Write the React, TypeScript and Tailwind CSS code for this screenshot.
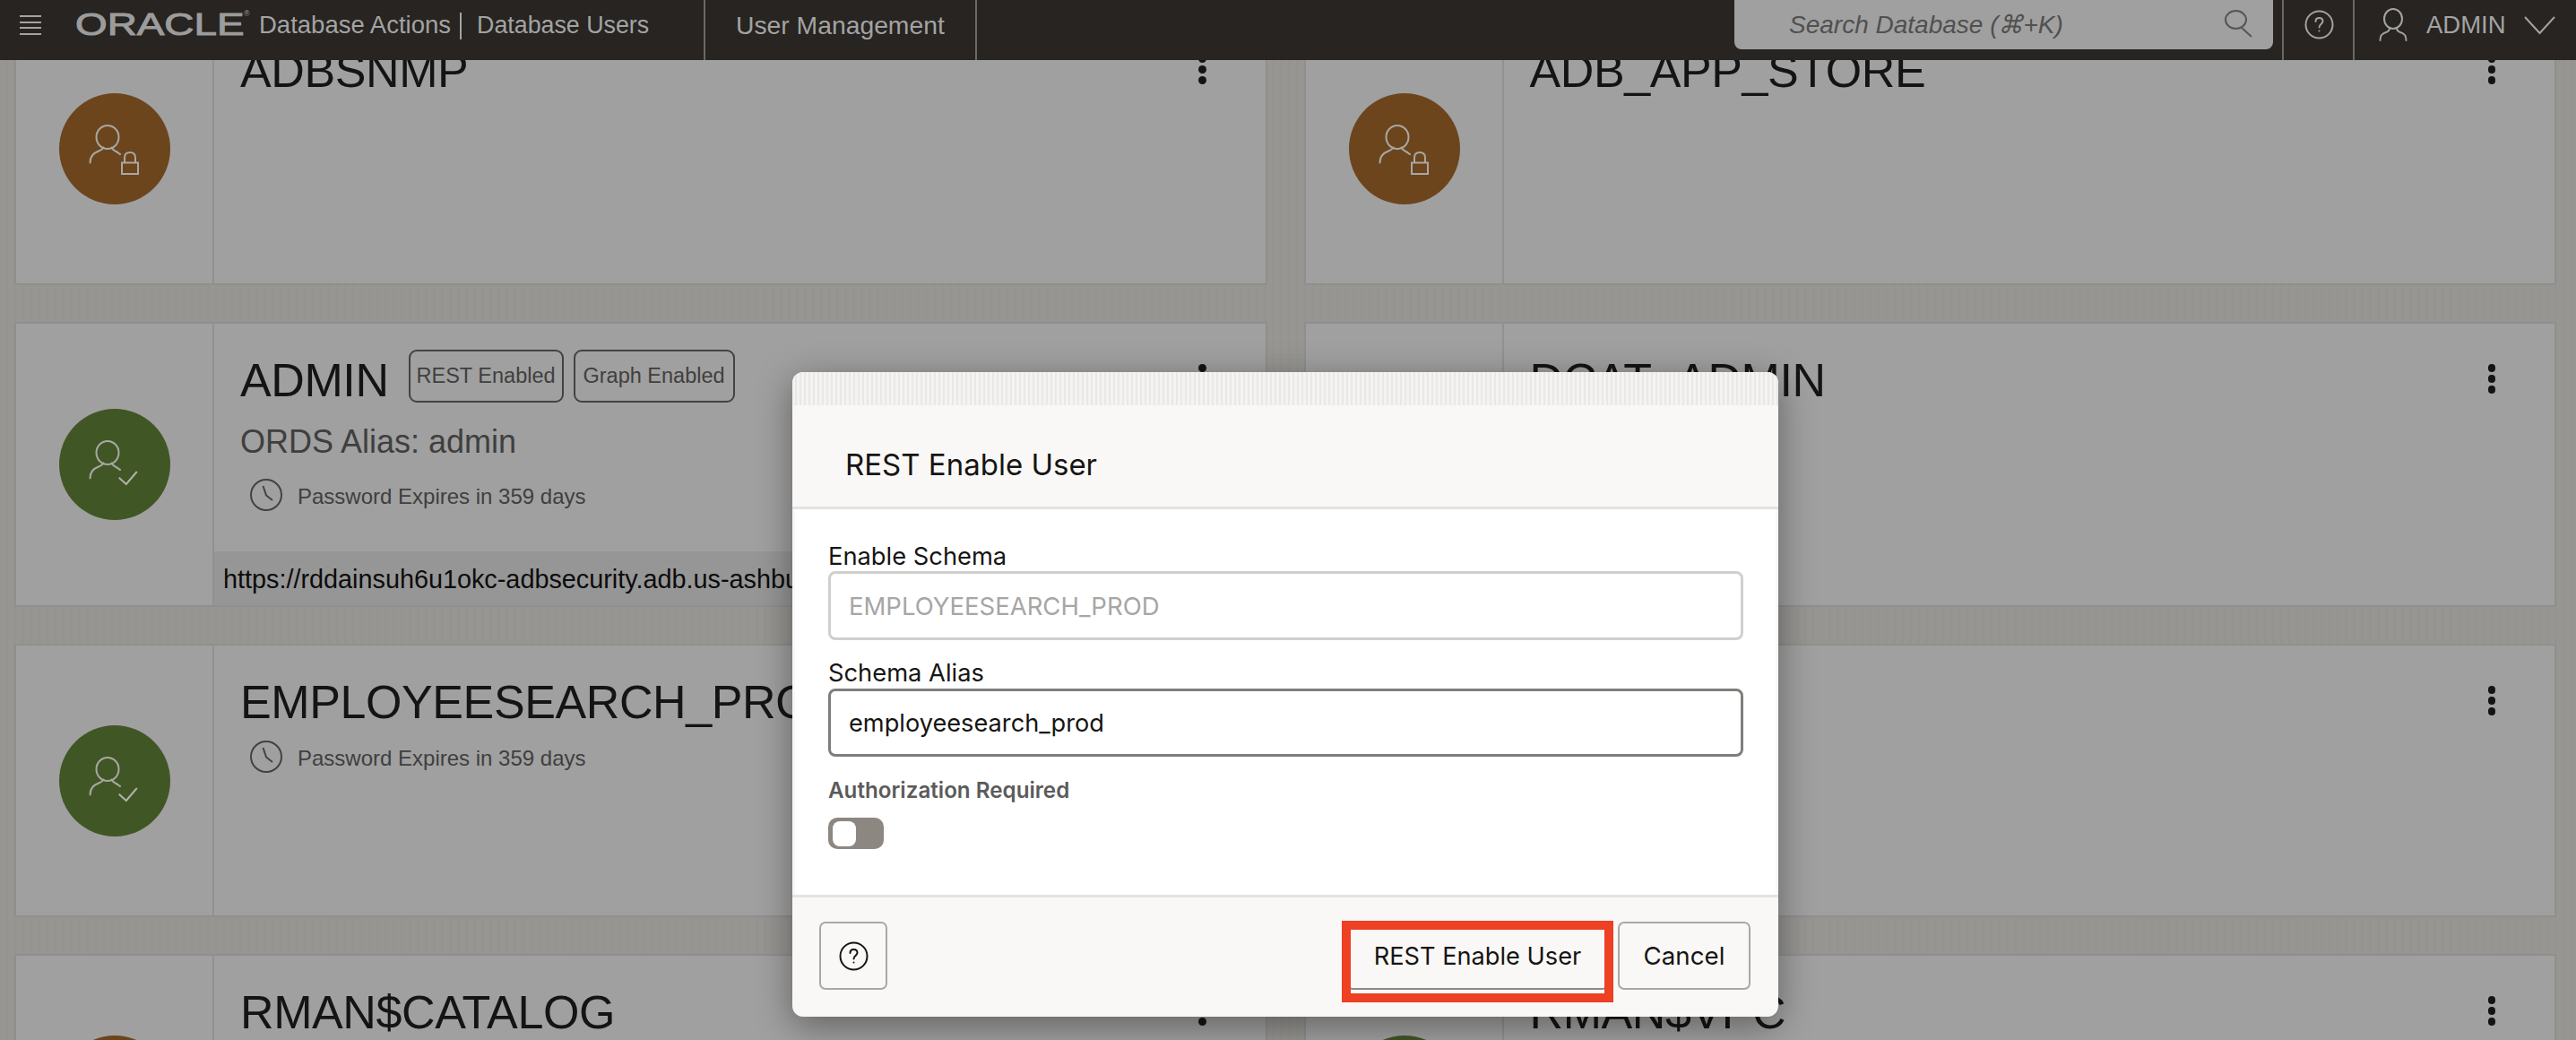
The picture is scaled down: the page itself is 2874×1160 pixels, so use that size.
import React from "react";

const UserShape = ({ stroke, w = 2 }: { stroke: string; w?: number }) => (
  <g fill="none" stroke={stroke} strokeWidth={w} strokeLinecap="round" strokeLinejoin="round">
    <ellipse cx="54" cy="49" rx="12.5" ry="13" />
    <path d="M34.5 77.5C34.5 71 38.5 66.5 44 64.5C47.5 63 49 62 49.5 60.5" />
    <path d="M58.5 60.5C59 62.5 61 63.5 63.5 65C65.5 66 67 67.5 68 68" />
  </g>
);

const Avatar = ({ kind }: { kind: "lock" | "check" }) => (
  <div className={`h-[124px] w-[124px] rounded-full ${kind === "lock" ? "bg-[#6c451d]" : "bg-[#415625]"}`}>
    <svg width="124" height="124" viewBox="0 0 124 124">
      <UserShape stroke="#a8a8a4" />
      {kind === "check" ? (
        <path d="M66.7 76.7L74.8 84L86.8 70" fill="none" stroke="#b0b0ac" strokeWidth="2" />
      ) : (
        <g fill="none" stroke="#a8a8a4" strokeWidth="2">
          <rect x="70" y="77.5" width="18" height="12.5" />
          <path d="M73 77.5V72C73 68 75 66 79 66C83 66 85 68 85 72V77.5" />
        </g>
      )}
    </svg>
  </div>
);

const Kebab = () => (
  <div className="ml-auto mr-[66px] mt-[12px] flex shrink-0 flex-col gap-[3.5px]">
    <span className="h-[8.5px] w-[8.5px] rounded-full bg-[#141414]" />
    <span className="h-[8.5px] w-[8.5px] rounded-full bg-[#141414]" />
    <span className="h-[8.5px] w-[8.5px] rounded-full bg-[#141414]" />
  </div>
);

const Badge = ({ text, w }: { text: string; w: string }) => (
  <span className={`mt-[-4px] flex h-[59px] shrink-0 items-center justify-center rounded-[9px] border-2 border-[#424242] text-[23.5px] text-[#3f3f3f] ${w}`}>
    {text}
  </span>
);

const Password = ({ mt }: { mt: string }) => (
  <div className={`flex items-center gap-[17px] ${mt}`}>
    <svg width="36" height="36" viewBox="0 0 36 36" fill="none" stroke="#424242" strokeWidth="2">
      <circle cx="18" cy="18" r="17" />
      <path d="M14.5 8L18 18.5L25 24" />
    </svg>
    <span className="pt-[3px] text-[24px] leading-[30px] text-[#3f3f3f]">Password Expires in 359 days</span>
  </div>
);

const Card = ({ kind, title, children }: { kind?: "lock" | "check"; title?: string; children?: React.ReactNode }) => (
  <div className="flex min-w-0 border-2 border-[#8f8f8d] bg-[#a0a0a0]">
    <div className="flex w-[221px] shrink-0 items-center justify-center border-r-2 border-[#919191] pl-[1px]">
      {kind && <Avatar kind={kind} />}
    </div>
    <div className="flex min-w-0 flex-1 flex-col">{children ?? <TitleRow title={title} />}</div>
  </div>
);

const TitleRow = ({ title, badges }: { title?: string; badges?: boolean }) => (
  <div className="flex items-start pl-[29px] pt-[33px]">
    {title && <h2 className="whitespace-nowrap text-[52px] font-normal leading-[60px] tracking-[-0.4px] text-[#141414]">{title}</h2>}
    {badges && (
      <div className="ml-[22px] flex gap-[11px]">
        <Badge text="REST Enabled" w="w-[173px]" />
        <Badge text="Graph Enabled" w="w-[180px]" />
      </div>
    )}
    <Kebab />
  </div>
);

const HelpIcon = ({ color, w = 33 }: { color: string; w?: number }) => (
  <svg width={w} height={w} viewBox="0 0 33 33" fill="none" stroke={color} strokeWidth="2">
    <circle cx="16.5" cy="16.5" r="15" />
    <path d="M12.5 13C12.5 10.5 14.2 9 16.5 9C18.8 9 20.5 10.5 20.5 12.8C20.5 15.5 16.5 16 16.5 19.5" strokeLinecap="round" />
    <circle cx="16.5" cy="23.5" r="1" fill={color} stroke="none" />
  </svg>
);

const Sep = ({ cls }: { cls: string }) => <span className={`absolute top-0 h-[67px] w-[2px] bg-[#6b6966] ${cls}`} />;

export default function App() {
  return (
    <div className="relative h-[1160px] w-[2874px] overflow-hidden bg-[#979693] bg-[repeating-linear-gradient(90deg,#979693_0px,#979693_6px,#959491_6px,#959491_9px)] font-['Liberation_Sans',sans-serif]">
      <main className="grid grid-cols-2 grid-rows-[304px_318px_305px_305px] gap-[41px] pl-[16px] pr-[22px] pt-[14px]">
        <Card kind="lock" title="ADBSNMP" />
        <Card kind="lock" title="ADB_APP_STORE" />
        <Card kind="check">
          <TitleRow title="ADMIN" badges />
          <div className="ml-[29px] mt-[17px] text-[36px] leading-[44px] text-[#3f3f3f]">ORDS Alias: admin</div>
          <Password mt="mt-[19px] ml-[40px]" />
          <div className="mt-auto flex h-[60px] items-center overflow-hidden whitespace-nowrap bg-[#969696] pl-[10px] pt-[3px] text-[28.8px] text-[#0c0c0c]">
            https://rddainsuh6u1okc-adbsecurity.adb.us-ashburn-1.oraclecloudapps.com/ords/admin/
          </div>
        </Card>
        <Card title="DCAT_ADMIN" />
        <Card kind="check">
          <TitleRow title="EMPLOYEESEARCH_PROD" />
          <Password mt="mt-[13px] ml-[40px]" />
        </Card>
        <Card />
        <Card kind="lock" title="RMAN$CATALOG" />
        <Card kind="check" title="RMAN$VPC" />
      </main>

      <header className="absolute left-0 right-0 top-0 flex h-[67px] items-start bg-[#272421] text-[#a3a3a3]">
        <div className="ml-[22px] mt-[17px] flex w-[24px] flex-col gap-[4.5px]">
          <span className="h-[2px] bg-[#a3a3a3]" />
          <span className="h-[2px] bg-[#a3a3a3]" />
          <span className="h-[2px] bg-[#a3a3a3]" />
          <span className="h-[2px] bg-[#a3a3a3]" />
        </div>
        <div className="relative ml-[38px] mt-[7px] w-[205px] shrink-0">
          <span className="inline-block origin-left scale-x-[1.31] text-[35px] font-normal leading-[40px] text-[#9c9c9c] [-webkit-text-stroke:1px_#9c9c9c]">ORACLE</span>
          <span className="absolute left-[188px] top-[3px] text-[9px] leading-[10px] text-[#9c9c9c]">®</span>
        </div>
        <span className="mt-[12px] whitespace-pre text-[27.5px] leading-[32px]">Database Actions</span>
        <span className="ml-[10px] mt-[14px] h-[30px] w-[2px] bg-[#a3a3a3]" />
        <span className="ml-[17px] mt-[12px] whitespace-pre text-[26.8px] leading-[32px]">Database Users</span>
        <span className="absolute left-[821px] top-[12px] whitespace-pre text-[28.3px] leading-[32px]">User Management</span>
        <Sep cls="left-[785px]" />
        <Sep cls="left-[1088px]" />
        <div className="absolute left-[1935px] top-0 flex h-[55px] w-[601px] items-start rounded-b-[8px] bg-[#a0a0a0]">
          <span className="ml-[61px] mt-[12px] text-[28px] italic leading-[32px] text-[#505050]">Search Database (⌘+K)</span>
          <svg className="absolute left-[546px] top-[10px]" width="34" height="32" viewBox="0 0 34 32" fill="none" stroke="#555" strokeWidth="2">
            <ellipse cx="13.5" cy="12" rx="11.5" ry="10" />
            <path d="M20 21L31 31" />
          </svg>
        </div>
        <Sep cls="left-[2546px]" />
        <div className="absolute left-[2571px] top-[11px]">
          <HelpIcon color="#a3a3a3" />
        </div>
        <Sep cls="left-[2625px]" />
        <svg className="absolute left-[2654px] top-[9px]" width="32" height="37" viewBox="0 0 32 37" fill="none" stroke="#a3a3a3" strokeWidth="2" strokeLinecap="round">
          <ellipse cx="16" cy="12" rx="10" ry="11" />
          <path d="M1.5 36C1.5 31 3 28.5 8 27C11 26 12 25 12 22.5" />
          <path d="M20 22.5C20 25 21 26 24 27C29 28.5 30.5 31 30.5 36" />
        </svg>
        <span className="absolute left-[2707px] top-[12px] text-[27.5px] leading-[32px]">ADMIN</span>
        <svg className="absolute left-[2816px] top-[17px]" width="35" height="22" viewBox="0 0 35 22" fill="none" stroke="#a3a3a3" strokeWidth="2">
          <path d="M1 2L17.5 20L34 2" />
        </svg>
      </header>

      <section className="absolute left-[884px] top-[415px] flex h-[719px] w-[1100px] flex-col overflow-hidden rounded-[12px] bg-[#f9f8f6] font-[Inter,sans-serif] shadow-[0_10px_40px_rgba(0,0,0,0.4)]">
        <div className="h-[37px] shrink-0 bg-[repeating-linear-gradient(90deg,#f4f3f1_0px,#f4f3f1_3px,#e9e8e6_3px,#e9e8e6_5px)]" />
        <div className="flex h-[116px] shrink-0 items-center border-b-[3px] border-[#e4e3e1] pl-[59px] pt-[18px]">
          <h1 className="text-[33px] font-normal leading-[40px] text-[#161513]">REST Enable User</h1>
        </div>
        <div className="mx-[3px] h-[430px] shrink-0 bg-white pl-[37px] pr-[36px] pt-[36px]">
          <label className="block h-[33px] text-[27.3px] leading-[34px] text-[#161513]">Enable Schema</label>
          <div className="flex h-[77px] items-center rounded-[8px] border-[3px] border-[#cfcfcd] pl-[20px] pt-[2px] text-[27.5px] text-[#a6a6a6]">EMPLOYEESEARCH_PROD</div>
          <label className="mt-[20px] block text-[27.3px] leading-[34px] text-[#161513]">Schema Alias</label>
          <div className="flex h-[76px] items-center rounded-[8px] border-[3px] border-[#807e7b] pl-[20px] pt-[2px] text-[27.2px] text-[#161513]">employeesearch_prod</div>
          <div className="mt-[23px] text-[24.2px] font-semibold leading-[30px] text-[#5b5b5b]">Authorization Required</div>
          <div className="mt-[15px] flex h-[35px] w-[62px] items-center rounded-[10px] bg-[#8d8782] pl-[5px]">
            <span className="h-[28px] w-[26px] rounded-[8px] bg-white" />
          </div>
        </div>
        <div className="flex flex-1 items-start justify-between border-t-[3px] border-[#e4e3e1] pl-[30px] pr-[31px] pt-[27px]">
          <button className="flex h-[76px] w-[76px] items-center justify-center rounded-[7px] border-2 border-[#a8a8a6]">
            <HelpIcon color="#161513" />
          </button>
          <div className="flex gap-[10px]">
            <div className="relative">
              <button className="h-[76px] w-[293px] rounded-[7px] border-2 border-[#8a8a88] pt-[2px] text-[27.2px] text-[#161513]">REST Enable User</button>
              <span className="absolute -bottom-[14px] -left-[5px] -right-[5px] -top-[1px] border-[10px] border-[#ee4023]" />
            </div>
            <button className="h-[76px] w-[148px] rounded-[7px] border-2 border-[#a8a8a6] pt-[2px] text-[27.7px] text-[#161513]">Cancel</button>
          </div>
        </div>
      </section>
    </div>
  );
}
